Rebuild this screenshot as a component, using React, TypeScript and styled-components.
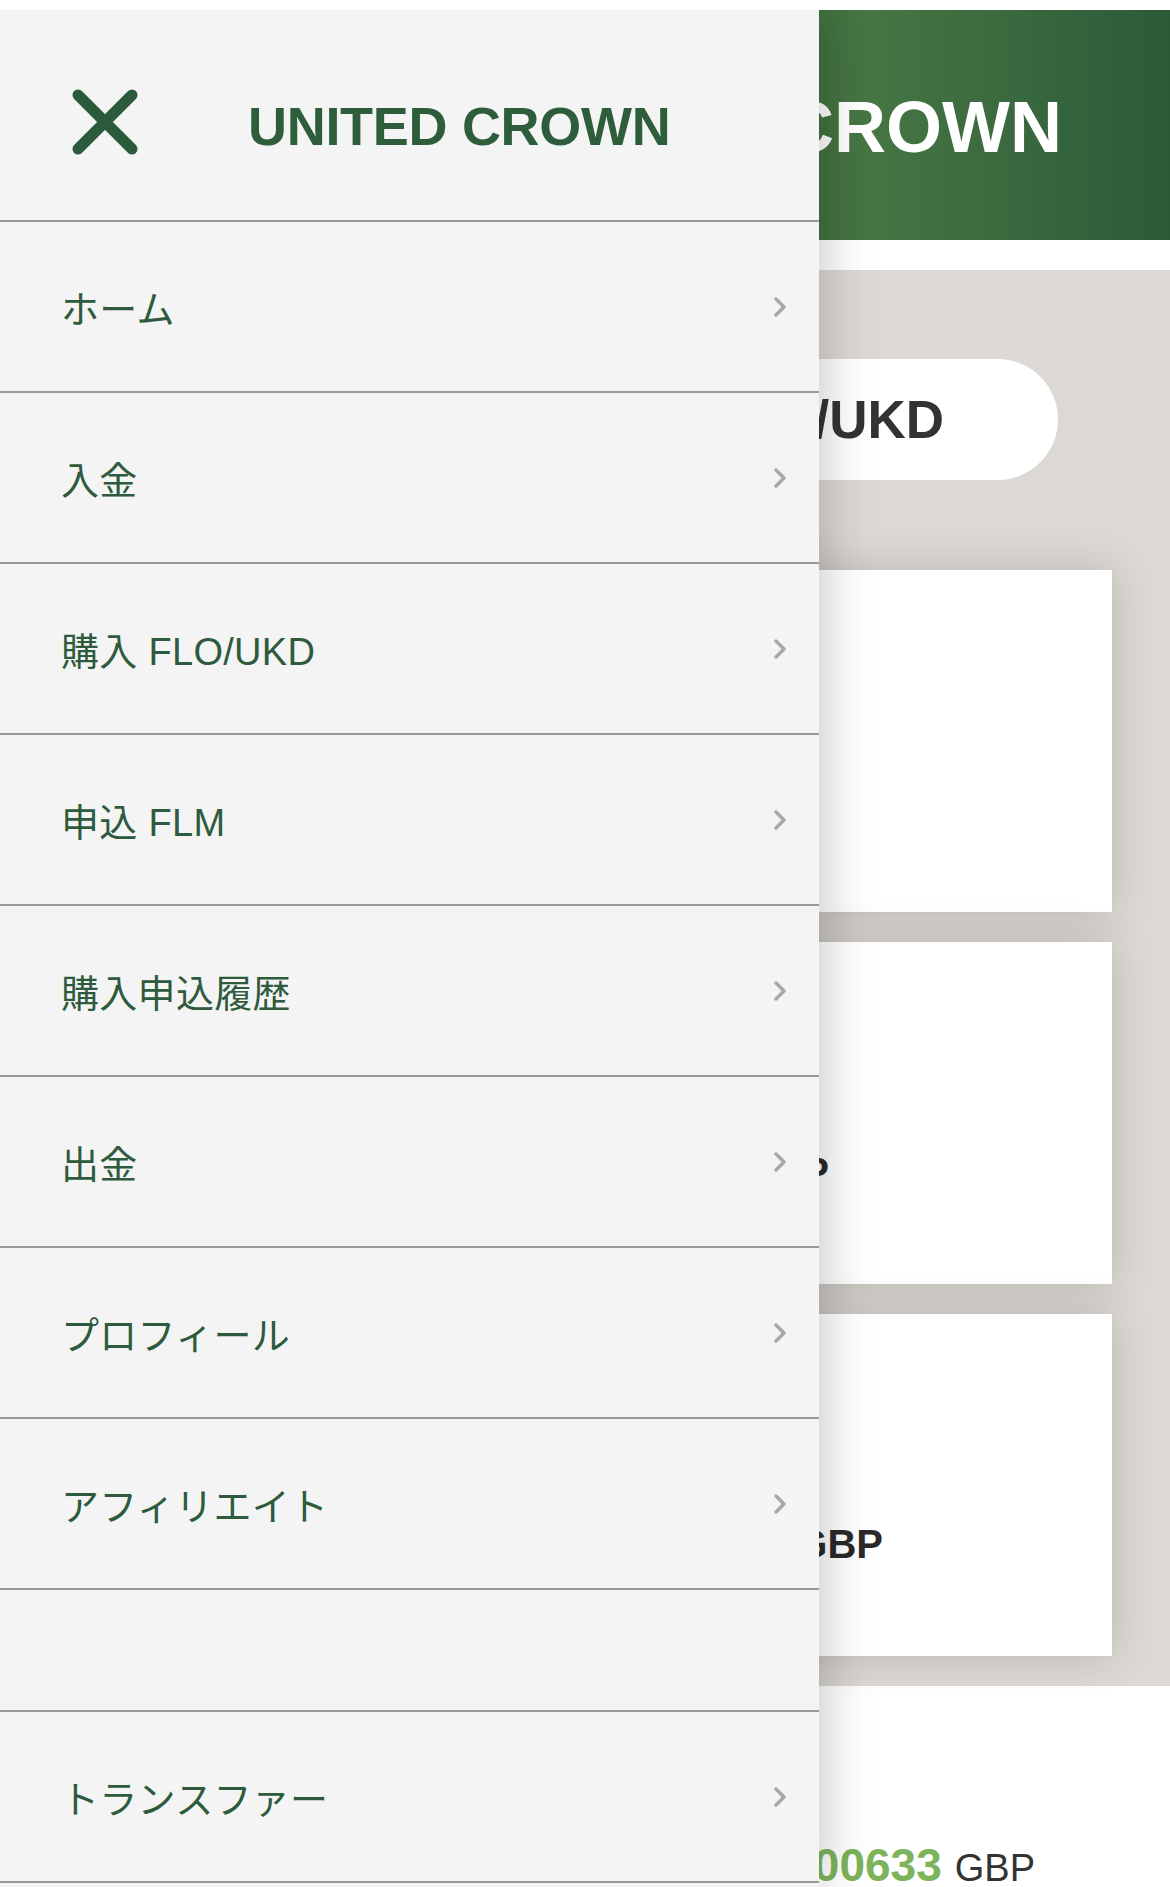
import styled, { createGlobalStyle } from "styled-components";

const GlobalStyle = createGlobalStyle`
  html, body {
    margin: 0;
    padding: 0;
    background: #ffffff;
  }
  body {
    font-family: "Liberation Sans", "Noto Sans CJK JP", sans-serif;
  }
  * {
    box-sizing: border-box;
  }
`;

const Screen = styled.div`
  width: 1170px;
  height: 1887px;
  padding-top: 10px;
  background: #ffffff;
  overflow: hidden;
`;

const Stage = styled.div`
  position: relative;
  height: 1877px;
  overflow: hidden;
`;

/* page behind the drawer */

const Page = styled.div`
  display: flex;
  flex-direction: column;
  height: 100%;
  overflow: hidden;

  & > * {
    flex-shrink: 0;
  }
`;

const TopBar = styled.header`
  display: flex;
  align-items: center;
  justify-content: flex-end;
  height: 230px;
  padding-right: 108px;
  background: linear-gradient(90deg, #2d5d3a 0%, #3c6b3e 62%, #467643 74%, #3a6a3e 86%, #2b5a39 100%);
`;

const BrandBig = styled.h1`
  margin: 4px 0 0;
  font-family: "Liberation Sans", sans-serif;
  font-size: 72px;
  font-weight: 700;
  color: #ffffff;
  white-space: nowrap;
`;

const Section = styled.section`
  display: flex;
  flex-direction: column;
  gap: 30px;
  margin-top: 30px;
  padding: 89px 58px 30px;
  background: #dcd8d3;
`;

const Pill = styled.div`
  display: flex;
  align-items: center;
  justify-content: flex-end;
  height: 121px;
  width: 1000px;
  margin-bottom: 60px;
  padding: 0 114px 10px 0;
  border-radius: 61px;
  background: #ffffff;
  font-size: 53px;
  font-weight: 700;
  color: #333333;
`;

const Card = styled.div`
  display: flex;
  flex-direction: column;
  height: 342px;
  padding: 108px 0 0;
  background: #ffffff;
  box-shadow: 0 0 40px rgba(0, 0, 0, 0.16);
`;

const CardLabel = styled.div<{ $padRight: number }>`
  align-self: flex-end;
  padding-right: ${(p) => p.$padRight}px;
  margin-bottom: 50px;
  font-size: 32px;
  line-height: 48px;
  color: #666666;
`;

const CardValue = styled.div<{ $padRight: number }>`
  align-self: flex-end;
  padding-right: ${(p) => p.$padRight}px;
  font-size: 40px;
  line-height: 48px;
  font-weight: 700;
  color: #2a2a2a;
`;

const Balance = styled.div`
  display: flex;
  align-items: baseline;
  justify-content: flex-end;
  gap: 13px;
  padding: 156px 135px 0 0;
  line-height: 46px;
`;

const BalanceNum = styled.span`
  font-size: 46px;
  font-weight: 700;
  color: #7db35a;
`;

const BalanceUnit = styled.span`
  font-size: 38px;
  color: #333333;
`;

/* drawer */

const Drawer = styled.nav`
  position: absolute;
  top: 0;
  left: 0;
  bottom: 0;
  width: 819px;
  background: #f4f4f4;
  box-shadow: 8px 0 45px rgba(0, 0, 0, 0.2);
`;

const DrawerHead = styled.div`
  display: flex;
  align-items: center;
  height: 212px;
  padding: 14px 0 0 72px;
  border-bottom: 2px solid #9a9a9a;
`;

const CloseButton = styled.button`
  display: flex;
  padding: 0;
  border: 0;
  background: none;
  cursor: pointer;
`;

const Brand = styled.div`
  margin: 8px 0 0 110px;
  font-family: "Liberation Sans", sans-serif;
  font-size: 54px;
  font-weight: 700;
  color: #2e5d3c;
  letter-spacing: -0.3px;
`;

const MenuList = styled.ul`
  margin: 0;
  padding: 0;
  list-style: none;
`;

const MenuItem = styled.li<{ $short?: boolean }>`
  display: flex;
  align-items: center;
  justify-content: space-between;
  height: ${(p) => (p.$short ? 122 : 171)}px;
  padding: 0 32px 0 61px;
  border-bottom: 2px solid #9a9a9a;
  font-size: 38px;
  letter-spacing: 0.3px;
  color: #2e5a3d;
`;

const Chevron = styled.svg`
  width: 14px;
  height: 24px;
  filter: blur(0.6px);
`;

const items = [
  "ホーム",
  "入金",
  "購入 FLO/UKD",
  "申込 FLM",
  "購入申込履歴",
  "出金",
  "プロフィール",
  "アフィリエイト",
  "",
  "トランスファー",
];

const cards = [
  { label: "購入可能額", value: "0.00 FLO", pad: 420 },
  { label: "保有 FLO", value: "1,250.00 GBP", pad: 283 },
  { label: "保有 UKD", value: "3,480.00 GBP", pad: 229 },
];

function App() {
  return (
    <Screen>
      <GlobalStyle />
      <Stage>
        <Page>
          <TopBar>
            <BrandBig>CROWN</BrandBig>
          </TopBar>
          <Section>
            <Pill>購入 FLO/UKD</Pill>
            {cards.map((c) => (
              <Card key={c.label}>
                <CardLabel $padRight={c.pad + 200}>{c.label}</CardLabel>
                <CardValue $padRight={c.pad}>{c.value}</CardValue>
              </Card>
            ))}
          </Section>
          <Balance>
            <BalanceNum>0.00633</BalanceNum>
            <BalanceUnit>GBP</BalanceUnit>
          </Balance>
        </Page>

        <Drawer>
          <DrawerHead>
            <CloseButton aria-label="close">
              <svg width="66" height="66" viewBox="0 0 66 66">
                <path
                  d="M6 6 L60 60 M60 6 L6 60"
                  stroke="#2c5b3b"
                  strokeWidth="11"
                  strokeLinecap="round"
                  fill="none"
                />
              </svg>
            </CloseButton>
            <Brand>UNITED CROWN</Brand>
          </DrawerHead>
          <MenuList>
            {items.map((label, i) => (
              <MenuItem key={i} $short={label === ""}>
                <span>{label}</span>
                {label !== "" && (
                  <Chevron viewBox="0 0 14 24">
                    <polyline
                      points="3,4 11,12 3,20"
                      fill="none"
                      stroke="#a8a8a8"
                      strokeWidth="3.5"
                      strokeLinecap="round"
                      strokeLinejoin="round"
                    />
                  </Chevron>
                )}
              </MenuItem>
            ))}
          </MenuList>
        </Drawer>
      </Stage>
    </Screen>
  );
}

export default App;
